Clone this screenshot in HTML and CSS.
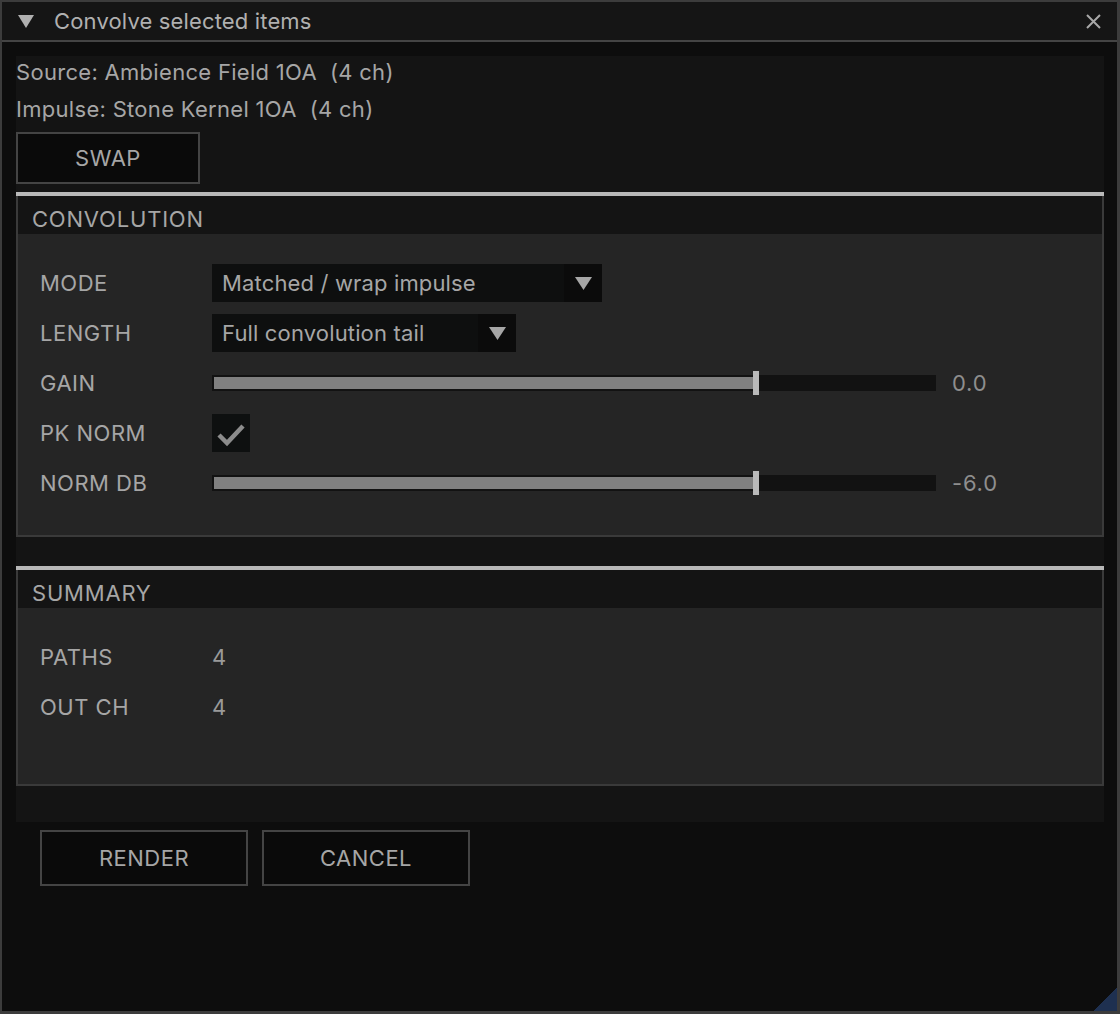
FILE: index.html
```html
<!DOCTYPE html>
<html>
<head>
  <meta charset="utf-8">
  <title>Convolve selected items</title>
  <link rel="stylesheet" href="styles.css">
</head>
<body>
  <div class="window">
    <div class="titlebar">
      <svg class="collapse" width="16" height="13" viewBox="0 0 16 13"><path d="M0 0 H16 L8 13 Z" fill="#b0b0b0"/></svg>
      <span class="title">Convolve selected items</span>
      <svg class="close" width="15" height="15" viewBox="0 0 15 15"><path d="M1 1 L14 14 M14 1 L1 14" stroke="#a8a8a8" stroke-width="2"/></svg>
    </div>

    <div class="content">
      <div class="child">
        <div class="info">Source: Ambience Field 1OA&nbsp; (4 ch)</div>
        <div class="info">Impulse: Stone Kernel 1OA&nbsp; (4 ch)</div>
        <button class="button swap">SWAP</button>

        <div class="section">
          <div class="section-header">CONVOLUTION</div>
          <div class="section-body">
            <div class="row">
              <span class="label">MODE</span>
              <div class="combo mode">
                <span class="combo-text">Matched / wrap impulse</span>
                <span class="combo-arrow"><svg width="17" height="13" viewBox="0 0 17 13"><path d="M0 0 H17 L8.5 13 Z" fill="#a6a6a6"/></svg></span>
              </div>
            </div>
            <div class="row">
              <span class="label">LENGTH</span>
              <div class="combo length">
                <span class="combo-text">Full convolution tail</span>
                <span class="combo-arrow"><svg width="17" height="13" viewBox="0 0 17 13"><path d="M0 0 H17 L8.5 13 Z" fill="#a6a6a6"/></svg></span>
              </div>
            </div>
            <div class="row">
              <span class="label">GAIN</span>
              <div class="slider">
                <div class="slider-fill" style="width: 75%"><span class="slider-grab"></span></div>
              </div>
              <span class="value">0.0</span>
            </div>
            <div class="row">
              <span class="label">PK NORM</span>
              <div class="checkbox">
                <svg width="38" height="38" viewBox="0 0 38 38"><path d="M7 21 L15 29 L31 12" fill="none" stroke="#8c8c8c" stroke-width="4.5"/></svg>
              </div>
            </div>
            <div class="row">
              <span class="label">NORM DB</span>
              <div class="slider">
                <div class="slider-fill" style="width: 75%"><span class="slider-grab"></span></div>
              </div>
              <span class="value">-6.0</span>
            </div>
          </div>
        </div>

        <div class="section summary">
          <div class="section-header">SUMMARY</div>
          <div class="section-body">
            <div class="row">
              <span class="label">PATHS</span>
              <span class="stat">4</span>
            </div>
            <div class="row">
              <span class="label">OUT CH</span>
              <span class="stat">4</span>
            </div>
          </div>
        </div>
      </div>

      <div class="actions">
        <button class="button action">RENDER</button>
        <button class="button action">CANCEL</button>
      </div>
    </div>

    <div class="resize-grip"></div>
  </div>
</body>
</html>
```

FILE: styles.css
```css
* {
  box-sizing: border-box;
}

body {
  margin: 0;
  background: #0d0d0d;
  font-family: 'Inter', 'Roboto', sans-serif;
  font-size: 22px;
  letter-spacing: 0.15px;
  color: #a6a6a6;
}

.window {
  position: relative;
  width: 1120px;
  height: 1014px;
  border: 2px solid #3c3c3c;
  border-right-width: 3px;
  border-bottom-width: 3px;
  background: #0d0d0d;
  display: flex;
  flex-direction: column;
}

.titlebar {
  height: 40px;
  flex: none;
  display: flex;
  align-items: center;
  background: #151515;
  border-bottom: 2px solid #444;
  padding: 0 16px;
}

.collapse {
  margin-right: 20px;
}

.title {
  flex: 1;
  color: #b0b0b0;
}

.content {
  padding: 14px 13px 0 14px;
}

.child {
  background: #141414;
  height: 766px;
}

.info {
  height: 32px;
  line-height: 32px;
  margin-bottom: 5px;
  letter-spacing: 0.3px;
}

.label,
.button {
  letter-spacing: 0.5px;
}

.button {
  font-family: inherit;
  font-size: 22px;
  color: #a6a6a6;
  background: #0a0a0a;
  border: 2px solid #444;
  padding: 0;
  cursor: pointer;
}

.swap {
  display: block;
  width: 184px;
  height: 52px;
  margin-top: 7px;
}

.section {
  margin-top: 8px;
  border-top: 4px solid #b8b8b8;
}

.summary {
  margin-top: 29px;
}

.section-header {
  height: 38px;
  line-height: 46px;
  overflow: hidden;
  padding-left: 14px;
  letter-spacing: 0.8px;
  background: #141414;
  border-left: 2px solid #3a3a3a;
  border-right: 2px solid #3a3a3a;
}

.section-body {
  background: #252525;
  border: 2px solid #3a3a3a;
  border-top: none;
  padding: 30px 22px 33px 22px;
  display: flex;
  flex-direction: column;
  gap: 12px;
}

.summary .section-body {
  padding-bottom: 58px;
}

.row {
  height: 38px;
  display: flex;
  align-items: center;
}

.label {
  width: 172px;
  flex: none;
}

.combo {
  height: 38px;
  display: flex;
  align-items: center;
  background: #0e0f0f;
}

.combo.mode {
  width: 390px;
}

.combo.length {
  width: 304px;
}

.combo-text {
  flex: 1;
  padding-left: 10px;
  white-space: nowrap;
}

.combo-arrow {
  width: 38px;
  height: 38px;
  display: flex;
  align-items: center;
  justify-content: center;
  background: #0b0b0b;
}

.slider {
  width: 724px;
  height: 16px;
  padding: 2px;
  background: #121212;
}

.slider-fill {
  position: relative;
  height: 12px;
  background: #808080;
}

.slider-grab {
  position: absolute;
  right: -5px;
  top: -6px;
  width: 6px;
  height: 24px;
  background: #b9b9b9;
}

.value {
  margin-left: 16px;
  letter-spacing: 0.8px;
  color: #8e8e8e;
}

.stat {
  color: #9a9a9a;
}

.checkbox {
  width: 38px;
  height: 38px;
  background: #0e1010;
}

.checkbox svg {
  display: block;
}

.actions {
  display: flex;
  gap: 14px;
  padding: 8px 0 0 24px;
}

.action {
  width: 208px;
  height: 56px;
}

.resize-grip {
  position: absolute;
  right: 0;
  bottom: 0;
  width: 23px;
  height: 23px;
  background: linear-gradient(135deg, transparent 50%, #1e3050 50%);
}
```
